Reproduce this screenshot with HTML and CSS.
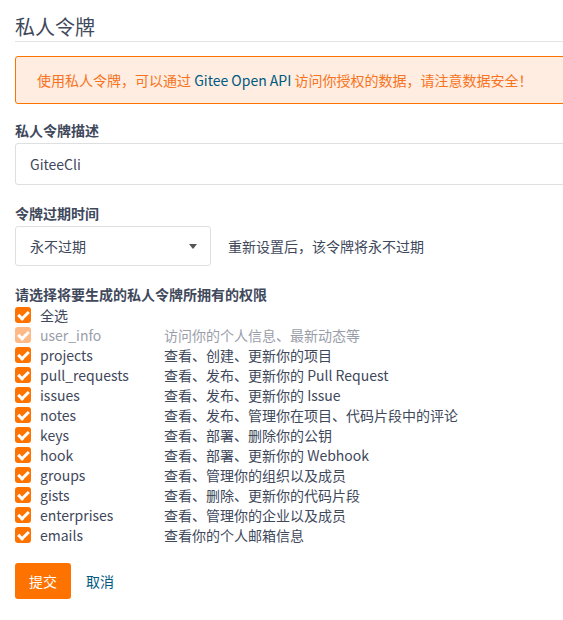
FILE: index.html
```html
<!DOCTYPE html>
<html lang="zh-CN">
<head>
<meta charset="utf-8">
<title>私人令牌</title>
<link rel="stylesheet" href="styles.css">
</head>
<body>
<div class="page">
  <h1 class="title">私人令牌</h1>
  <div class="alert">使用私人令牌，可以通过 <span class="alert-link">Gitee Open API</span> 访问你授权的数据，请注意数据安全！</div>

  <div class="field field-desc">
    <label class="label">私人令牌描述</label>
    <div class="input">GiteeCli</div>
  </div>

  <div class="field field-expire">
    <label class="label">令牌过期时间</label>
    <div class="expire-row">
      <div class="select">
        <span>永不过期</span>
        <svg class="caret" width="8" height="5" viewBox="0 0 8 5"><path d="M0 0H8L4 5Z" fill="#555"/></svg>
      </div>
      <span class="help">重新设置后，该令牌将永不过期</span>
    </div>
  </div>

  <div class="field field-scopes">
    <label class="label">请选择将要生成的私人令牌所拥有的权限</label>
    <ul class="scopes">
      <li class="scope"><span class="cb"></span><span class="name">全选</span></li>
      <li class="scope disabled"><span class="cb"></span><span class="name">user_info</span><span class="desc">访问你的个人信息、最新动态等</span></li>
      <li class="scope"><span class="cb"></span><span class="name">projects</span><span class="desc">查看、创建、更新你的项目</span></li>
      <li class="scope"><span class="cb"></span><span class="name">pull_requests</span><span class="desc">查看、发布、更新你的 Pull Request</span></li>
      <li class="scope"><span class="cb"></span><span class="name">issues</span><span class="desc">查看、发布、更新你的 Issue</span></li>
      <li class="scope"><span class="cb"></span><span class="name">notes</span><span class="desc">查看、发布、管理你在项目、代码片段中的评论</span></li>
      <li class="scope"><span class="cb"></span><span class="name">keys</span><span class="desc">查看、部署、删除你的公钥</span></li>
      <li class="scope"><span class="cb"></span><span class="name">hook</span><span class="desc">查看、部署、更新你的 Webhook</span></li>
      <li class="scope"><span class="cb"></span><span class="name">groups</span><span class="desc">查看、管理你的组织以及成员</span></li>
      <li class="scope"><span class="cb"></span><span class="name">gists</span><span class="desc">查看、删除、更新你的代码片段</span></li>
      <li class="scope"><span class="cb"></span><span class="name">enterprises</span><span class="desc">查看、管理你的企业以及成员</span></li>
      <li class="scope"><span class="cb"></span><span class="name">emails</span><span class="desc">查看你的个人邮箱信息</span></li>
    </ul>
  </div>

  <div class="actions">
    <button class="btn-submit">提交</button>
    <a class="btn-cancel">取消</a>
  </div>
</div>
</body>
</html>
```

FILE: styles.css
```css
html, body {
  margin: 0;
  padding: 0;
  background: #fff;
}
body {
  font-family: "Noto Sans CJK SC", "Noto Sans", sans-serif;
  font-size: 14px;
  color: #40485b;
}
.page {
  width: 563px;
  box-sizing: border-box;
  padding-left: 15px;
  overflow: hidden;
}
.title {
  margin: 13px 0 0;
  font-size: 20px;
  font-weight: normal;
  line-height: 28px;
  color: #40485b;
  border-bottom: 1px solid #e3e3e3;
}
.alert {
  margin-top: 14px;
  margin-right: -20px;
  height: 48px;
  box-sizing: border-box;
  line-height: 20px;
  padding: 13px 0 0 21px;
  background: #feede0;
  border: 1px solid #fe7300;
  border-radius: 3px;
  color: #f7731e;
}
.alert-link {
  color: #005980;
}
.field {
  display: flex;
  flex-direction: column;
}
.label {
  font-weight: bold;
  line-height: 20px;
  color: #40485b;
}
.field-desc { margin-top: 16px; }
.field-expire { margin-top: 18px; }
.field-scopes { margin-top: 18px; }
.input {
  margin-top: 3px;
  margin-right: -20px;
  height: 42px;
  box-sizing: border-box;
  border: 1px solid #dedfe0;
  border-radius: 3px;
  padding-left: 14px;
  display: flex;
  align-items: center;
  color: #40485b;
}
.expire-row {
  margin-top: 3px;
  display: flex;
  align-items: center;
}
.select {
  width: 196px;
  height: 40px;
  box-sizing: border-box;
  border: 1px solid #dedfe0;
  border-radius: 3px;
  padding: 0 13px 0 14px;
  display: flex;
  align-items: center;
  justify-content: space-between;
  color: #40485b;
}
.help {
  margin-left: 17px;
  color: #40485b;
}
.scopes {
  list-style: none;
  margin: 1px 0 0;
  padding: 0;
}
.scope {
  display: flex;
  align-items: center;
  height: 20px;
}
.cb {
  width: 16px;
  height: 16px;
  border-radius: 3px;
  background: #fe7300;
  flex: none;
  position: relative;
}
.cb::after {
  content: "";
  position: absolute;
  left: 5px;
  top: 2px;
  width: 4px;
  height: 8px;
  border: solid #fff;
  border-width: 0 3px 3px 0;
  transform: rotate(45deg);
}
.scope.disabled .cb {
  background: #fdba87;
}
.name {
  margin-left: 9px;
  width: 124px;
  color: #40485b;
}
.scope.disabled .name,
.scope.disabled .desc {
  color: #9a9ea9;
}
.desc {
  color: #40485b;
}
.actions {
  margin-top: 18px;
  display: flex;
  align-items: center;
}
.btn-submit {
  width: 56px;
  height: 36px;
  border: none;
  border-radius: 3px;
  background: #fe7300;
  color: #fff;
  font-family: inherit;
  font-size: 14px;
  padding: 0;
}
.btn-cancel {
  margin-left: 15px;
  color: #005980;
}
```
